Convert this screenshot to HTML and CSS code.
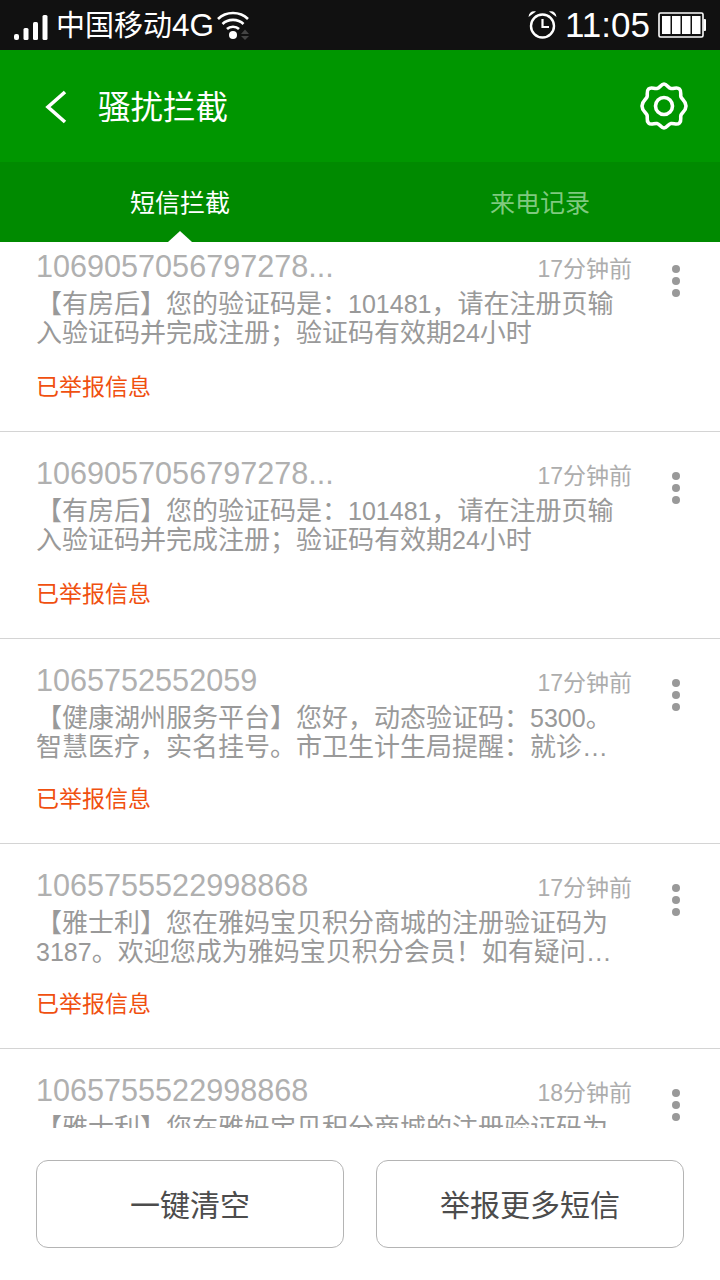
FILE: index.html
```html
<!DOCTYPE html>
<html lang="zh-CN">
<head>
  <meta charset="UTF-8" />
  <meta name="viewport" content="width=device-width, initial-scale=1.0" />
  <title>骚扰拦截</title>
  <link rel="stylesheet" href="styles.css">
</head>
<body>
  <div class="screen">
    <div class="status">
      <div class="status-left">
        <svg class="signal" width="34" height="26" viewBox="0 0 34 26">
          <rect x="0" y="20" width="5" height="6" rx="2" fill="#fff"/>
          <rect x="9.5" y="14" width="5" height="12" rx="1.5" fill="#fff"/>
          <rect x="19" y="8" width="5" height="18" rx="1.5" fill="#fff"/>
          <rect x="28.5" y="1" width="5" height="25" rx="1.5" fill="#fff"/>
        </svg>
        <span class="carrier">中国移动<span class="carrier-net">4G</span></span>
        <svg class="wifi" width="34" height="30" viewBox="0 0 34 30">
          <path d="M1 9 C9 1 23 1 31 9" fill="none" stroke="#fff" stroke-width="2.6"/>
          <path d="M5.5 14 C11 8.5 21 8.5 26.5 14" fill="none" stroke="#fff" stroke-width="2.6"/>
          <path d="M10 19 C13 16 19 16 22 19" fill="none" stroke="#fff" stroke-width="2.6"/>
          <circle cx="16" cy="25" r="4" fill="#fff"/>
          <path d="M24 24 L28 19.5 L32 24 Z M24 26 L32 26 L28 30 Z" fill="#444"/>
        </svg>
      </div>
      <div class="status-right">
        <svg class="alarm" width="30" height="30" viewBox="0 0 30 30">
          <circle cx="14.5" cy="16" r="11.5" fill="none" stroke="#fff" stroke-width="2.4"/>
          <path d="M14.5 9 V17 H21" fill="none" stroke="#fff" stroke-width="2.2"/>
          <path d="M0.5 7 C1 2.5 4 0.5 8 1.5 Z M28.5 7 C28 2.5 25 0.5 21 1.5 Z" fill="#fff"/>
        </svg>
        <span class="clock">11:05</span>
        <svg class="battery" width="48" height="26" viewBox="0 0 48 26">
          <rect x="1" y="1" width="44" height="24" rx="1.5" fill="none" stroke="#fff" stroke-width="1.6"/>
          <rect x="4" y="4" width="8.5" height="18" fill="#fff"/>
          <rect x="14" y="4" width="8.5" height="18" fill="#fff"/>
          <rect x="24" y="4" width="8.5" height="18" fill="#fff"/>
          <rect x="34" y="4" width="8.5" height="18" fill="#fff"/>
          <rect x="45.5" y="7" width="2.5" height="12" rx="1" fill="#fff"/>
        </svg>
      </div>
    </div>

    <div class="header">
      <svg class="back" width="24" height="34" viewBox="0 0 24 34">
        <path d="M21 2 L4 17 L21 32" fill="none" stroke="#fff" stroke-width="3.6"/>
      </svg>
      <span class="title">骚扰拦截</span>
      <svg class="gear" width="50" height="50" viewBox="0 0 50 50">
        <path d="M25 3 C28 3 29 7 32 7.5 C35 8 38 5.5 40.5 8 C43 10.5 41 13.5 42 16 C43 18.5 47 20 47 25 C47 30 43 31.5 42 34 C41 36.5 43 39.5 40.5 42 C38 44.5 35 42 32 42.5 C29 43 28 47 25 47 C22 47 21 43 18 42.5 C15 42 12 44.5 9.5 42 C7 39.5 9 36.5 8 34 C7 31.5 3 30 3 25 C3 20 7 18.5 8 16 C9 13.5 7 10.5 9.5 8 C12 5.5 15 8 18 7.5 C21 7 22 3 25 3 Z" fill="none" stroke="#fff" stroke-width="3.6"/>
        <circle cx="25" cy="25" r="8.5" fill="none" stroke="#fff" stroke-width="3.6"/>
      </svg>
    </div>

    <div class="tabs">
      <div class="tab tab-active">短信拦截</div>
      <div class="tab">来电记录</div>
    </div>

    <div class="list">
      <div class="list-inner">
        <div class="row row-tall">
          <div class="row-top"><span class="number">1069057056797278...</span><span class="time">17分钟前</span></div>
          <div class="msg">【有房后】您的验证码是：<span class="digits">101481</span>，请在注册页输<br>入验证码并完成注册；验证码有效期<span class="digits">24</span>小时</div>
          <div class="flag">已举报信息</div>
          <div class="dots"><i></i><i></i><i></i></div>
        </div>
        <div class="row row-tall">
          <div class="row-top"><span class="number">1069057056797278...</span><span class="time">17分钟前</span></div>
          <div class="msg">【有房后】您的验证码是：<span class="digits">101481</span>，请在注册页输<br>入验证码并完成注册；验证码有效期<span class="digits">24</span>小时</div>
          <div class="flag">已举报信息</div>
          <div class="dots"><i></i><i></i><i></i></div>
        </div>
        <div class="row">
          <div class="row-top"><span class="number">1065752552059</span><span class="time">17分钟前</span></div>
          <div class="msg">【健康湖州服务平台】您好，动态验证码：<span class="digits">5300</span>。<br>智慧医疗，实名挂号。市卫生计生局提醒：就诊…</div>
          <div class="flag">已举报信息</div>
          <div class="dots"><i></i><i></i><i></i></div>
        </div>
        <div class="row">
          <div class="row-top"><span class="number">1065755522998868</span><span class="time">17分钟前</span></div>
          <div class="msg">【雅士利】您在雅妈宝贝积分商城的注册验证码为<br><span class="digits">3187</span>。欢迎您成为雅妈宝贝积分会员！如有疑问…</div>
          <div class="flag">已举报信息</div>
          <div class="dots"><i></i><i></i><i></i></div>
        </div>
        <div class="row">
          <div class="row-top"><span class="number">1065755522998868</span><span class="time">18分钟前</span></div>
          <div class="msg">【雅士利】您在雅妈宝贝积分商城的注册验证码为</div>
          <div class="dots"><i></i><i></i><i></i></div>
        </div>
      </div>
    </div>

    <div class="footer">
      <button class="btn">一键清空</button>
      <button class="btn">举报更多短信</button>
    </div>
  </div>
</body>
</html>
```

FILE: styles.css
```css
* {
  box-sizing: border-box;
}
body {
  margin: 0;
  background: #fff;
  font-family: "Liberation Sans", "Noto Sans CJK SC", sans-serif;
}
.screen {
  width: 720px;
  height: 1280px;
  display: flex;
  flex-direction: column;
  overflow: hidden;
}

/* status bar */
.status {
  height: 50px;
  flex: none;
  background: #111;
  color: #fff;
  display: flex;
  justify-content: space-between;
  align-items: center;
  padding: 0 14px 0 14px;
}
.status-left, .status-right {
  display: flex;
  align-items: center;
}
.signal {
  margin-right: 8px;
  margin-top: 3px;
}
.carrier {
  font-size: 29px;
  line-height: 50px;
}
.carrier-net {
  font-size: 31.5px;
}
.wifi {
  margin-left: 3px;
}
.clock {
  font-size: 35px;
  line-height: 50px;
  margin: 0 8px 0 7px;
}

/* title bar */
.header {
  height: 112px;
  flex: none;
  background: #009600;
  display: flex;
  align-items: center;
  padding: 0 31px 0 44px;
}
.back {
  margin-top: 2px;
}
.title {
  color: #fff;
  font-size: 32.5px;
  margin: 0 0 3px 30px;
  flex: 1;
}

/* tabs */
.tabs {
  height: 80px;
  flex: none;
  background: #008a00;
  display: flex;
}
.tab {
  flex: 1;
  text-align: center;
  font-size: 25px;
  line-height: 83px;
  color: #7fc97f;
  position: relative;
}
.tab-active {
  color: #fff;
}
.tab-active::after {
  content: "";
  position: absolute;
  left: 168px;
  bottom: 0;
  border-left: 12px solid transparent;
  border-right: 12px solid transparent;
  border-bottom: 11px solid #fff;
}

/* list */
.list {
  flex: 1;
  overflow: hidden;
}
.list-inner {
  margin-top: -17px;
}
.row {
  height: 205px;
  border-bottom: 1px solid #d4d4d4;
  padding: 23px 88px 0 36px;
  position: relative;
}
.row-tall {
  height: 207px;
}
.row-top {
  display: flex;
  justify-content: space-between;
  align-items: center;
  height: 36px;
}
.number {
  font-size: 30.6px;
  color: #b0b0b0;
}
.time {
  font-size: 23px;
  color: #adadad;
  margin-top: 2px;
}
.msg {
  font-size: 26px;
  line-height: 29px;
  color: #999;
  margin-top: 6px;
}
.digits {
  font-size: 25px;
}
.flag {
  font-size: 23px;
  line-height: 30px;
  color: #f0500f;
  margin-top: 22px;
}
.row-tall .flag {
  margin-top: 24px;
}
.dots {
  position: absolute;
  right: 40px;
  top: 40px;
  display: flex;
  flex-direction: column;
  gap: 4px;
}
.dots i {
  width: 8px;
  height: 8px;
  border-radius: 50%;
  background: #999;
}

/* bottom buttons */
.footer {
  height: 152px;
  flex: none;
  background: #fff;
  display: flex;
  gap: 32px;
  padding: 32px 36px;
}
.btn {
  flex: 1;
  height: 88px;
  background: #fff;
  border: 1px solid #b4b4b4;
  border-radius: 12px;
  padding: 0 0 3px;
  font-family: inherit;
  font-size: 30px;
  color: #4c4c4c;
}
```
